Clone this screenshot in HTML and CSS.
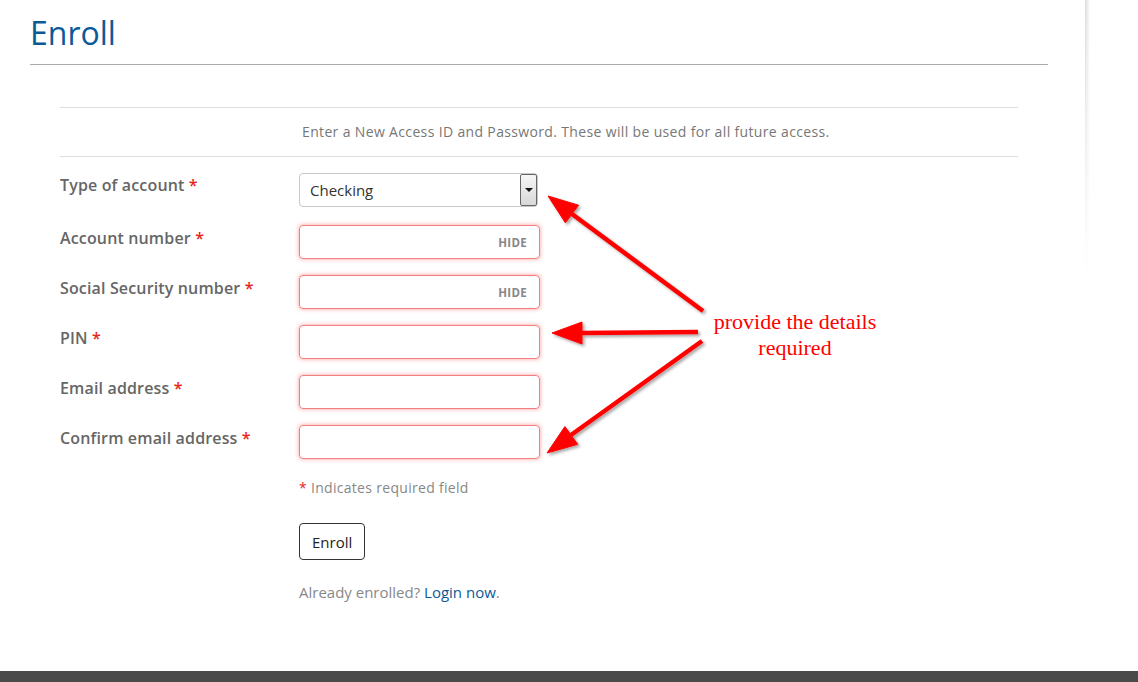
FILE: index.html
```html
<!DOCTYPE html>
<html lang="en">
<head>
    <meta charset="UTF-8">
    <title>Enroll</title>
    <link rel="stylesheet" href="styles.css">
</head>
<body>
    <div class="page">
        <div class="content">
            <h1 class="page-title">Enroll</h1>

            <div class="enroll-box">
                <p class="intro">Enter a New Access ID and Password. These will be used for all future access.</p>

                <form class="enroll-form">
                    <div class="form-row first">
                        <label class="field-label">Type of account <span class="req">*</span></label>
                        <div class="select-box">
                            <span class="select-value">Checking</span>
                            <span class="select-btn"><span class="caret"></span></span>
                        </div>
                    </div>

                    <div class="form-row">
                        <label class="field-label">Account number <span class="req">*</span></label>
                        <div class="text-box"><span class="hide-btn">HIDE</span></div>
                    </div>

                    <div class="form-row">
                        <label class="field-label">Social Security number <span class="req">*</span></label>
                        <div class="text-box"><span class="hide-btn">HIDE</span></div>
                    </div>

                    <div class="form-row">
                        <label class="field-label">PIN <span class="req">*</span></label>
                        <div class="text-box"></div>
                    </div>

                    <div class="form-row">
                        <label class="field-label">Email address <span class="req">*</span></label>
                        <div class="text-box"></div>
                    </div>

                    <div class="form-row">
                        <label class="field-label">Confirm email address <span class="req">*</span></label>
                        <div class="text-box"></div>
                    </div>

                    <div class="form-bottom">
                        <p class="required-note"><span class="req">*</span> Indicates required field</p>
                        <button type="button" class="enroll-btn">Enroll</button>
                        <p class="login-note">Already enrolled? <a href="#">Login now</a>.</p>
                    </div>
                </form>
            </div>
        </div>

        <!-- annotation drawn on top of the screenshot -->
        <svg class="arrows" width="1138" height="682" viewBox="0 0 1138 682">
            <defs>
                <filter id="shadow" x="-20%" y="-20%" width="140%" height="140%">
                    <feDropShadow dx="2" dy="2" stdDeviation="1.5" flood-color="#000" flood-opacity="0.35"/>
                </filter>
            </defs>
            <g fill="#f00" stroke="#f00" filter="url(#shadow)">
                <line x1="703" y1="311" x2="572" y2="214" stroke-width="4.5"/>
                <polygon points="548,196 578.6,205.2 565.4,222.8" stroke-width="1"/>
                <line x1="698" y1="332" x2="580" y2="333" stroke-width="4.5"/>
                <polygon points="552,333 582,322 582,344" stroke-width="1"/>
                <line x1="702" y1="341" x2="571" y2="435" stroke-width="4.5"/>
                <polygon points="547,453 564.9,426.5 577.7,444.3" stroke-width="1"/>
            </g>
        </svg>
        <div class="note">provide the details<br>required</div>

        <div class="footer"></div>
    </div>
</body>
</html>
```

FILE: styles.css
```css
body {
    margin: 0;
    padding: 0;
    background-color: #fff;
    font-family: "Open Sans", Arial, sans-serif;
}

.page {
    position: relative;
    width: 1138px;
    height: 682px;
    overflow: hidden;
}

.content {
    width: 1085px;
    height: 671px;
    position: relative;
    box-sizing: border-box;
    padding: 0 37px 0 30px;
}

/* faint vertical shade just right of the content column */
.content::after {
    content: "";
    position: absolute;
    top: 0;
    right: -5px;
    width: 5px;
    height: 275px;
    background:
        linear-gradient(to bottom, rgba(255, 255, 255, 0), #fff),
        linear-gradient(to right, rgba(0, 0, 0, 0.14), rgba(0, 0, 0, 0));
}

.page-title {
    margin: 0;
    padding-top: 14px;
    height: 38px;
    font-size: 32px;
    font-weight: normal;
    line-height: 38px;
    color: #0b5a98;
    border-bottom: 1px solid #aaa;
    padding-bottom: 12px;
}

.enroll-box {
    margin: 42px 30px 0 30px;
}

.intro {
    margin: 0;
    padding: 14px 0 14px 242px;
    font-size: 14px;
    letter-spacing: 0.35px;
    line-height: 20px;
    color: #777;
    border-top: 1px solid #ddd;
    border-bottom: 1px solid #ddd;
}

.enroll-form {
    padding-top: 16px;
}

.form-row {
    display: grid;
    grid-template-columns: 239px 241px;
    margin-bottom: 16px;
}

.form-row.first {
    margin-bottom: 18px;
}

.field-label {
    padding-top: 2px;
    font-size: 16px;
    font-weight: 600;
    letter-spacing: 0.15px;
    line-height: 20px;
    color: #666;
}

.form-row:not(.first) .field-label {
    padding-top: 3px;
}

.req {
    color: #e8251b;
}

.select-box {
    width: 239px;
    height: 34px;
    box-sizing: border-box;
    border: 1px solid #c8c8c8;
    border-radius: 4px;
    display: flex;
    align-items: center;
    justify-content: space-between;
    padding-left: 10px;
}

.select-value {
    font-size: 15px;
    color: #333;
}

.select-btn {
    width: 17px;
    height: 32px;
    box-sizing: border-box;
    border: 1px solid #666;
    border-radius: 2px;
    background: linear-gradient(to bottom, #f6f6f6, #d8d8d8);
    display: flex;
    align-items: center;
    justify-content: center;
}

.caret {
    width: 0;
    height: 0;
    border-left: 4px solid transparent;
    border-right: 4px solid transparent;
    border-top: 4px solid #111;
}

.text-box {
    width: 241px;
    height: 34px;
    box-sizing: border-box;
    border: 1px solid #f08080;
    border-radius: 4px;
    box-shadow: 0 0 4px rgba(255, 50, 50, 0.5);
    display: flex;
    align-items: center;
    justify-content: flex-end;
    padding-right: 12px;
}

.hide-btn {
    font-size: 11.5px;
    font-weight: 700;
    letter-spacing: 0.3px;
    color: #888;
}

.form-bottom {
    padding-left: 239px;
    padding-top: 3px;
}

.required-note {
    margin: 0;
    font-size: 14px;
    letter-spacing: 0.3px;
    line-height: 20px;
    color: #888;
}

.enroll-btn {
    margin-top: 25px;
    height: 37px;
    padding: 0 12px;
    font-family: "Open Sans", Arial, sans-serif;
    font-size: 15px;
    color: #222;
    background: #fff;
    border: 1px solid #333;
    border-radius: 4px;
}

.login-note {
    margin: 22px 0 0 0;
    font-size: 15px;
    line-height: 20px;
    color: #888;
}

.login-note a {
    color: #0b5a98;
    text-decoration: none;
}

.arrows {
    position: absolute;
    top: 0;
    left: 0;
    pointer-events: none;
}

.note {
    position: absolute;
    left: 695px;
    top: 309px;
    width: 200px;
    text-align: center;
    font-family: "Liberation Serif", "Times New Roman", serif;
    font-size: 22px;
    line-height: 26px;
    color: #f00;
}

.footer {
    height: 11px;
    background-color: #4a4a4a;
}
```
